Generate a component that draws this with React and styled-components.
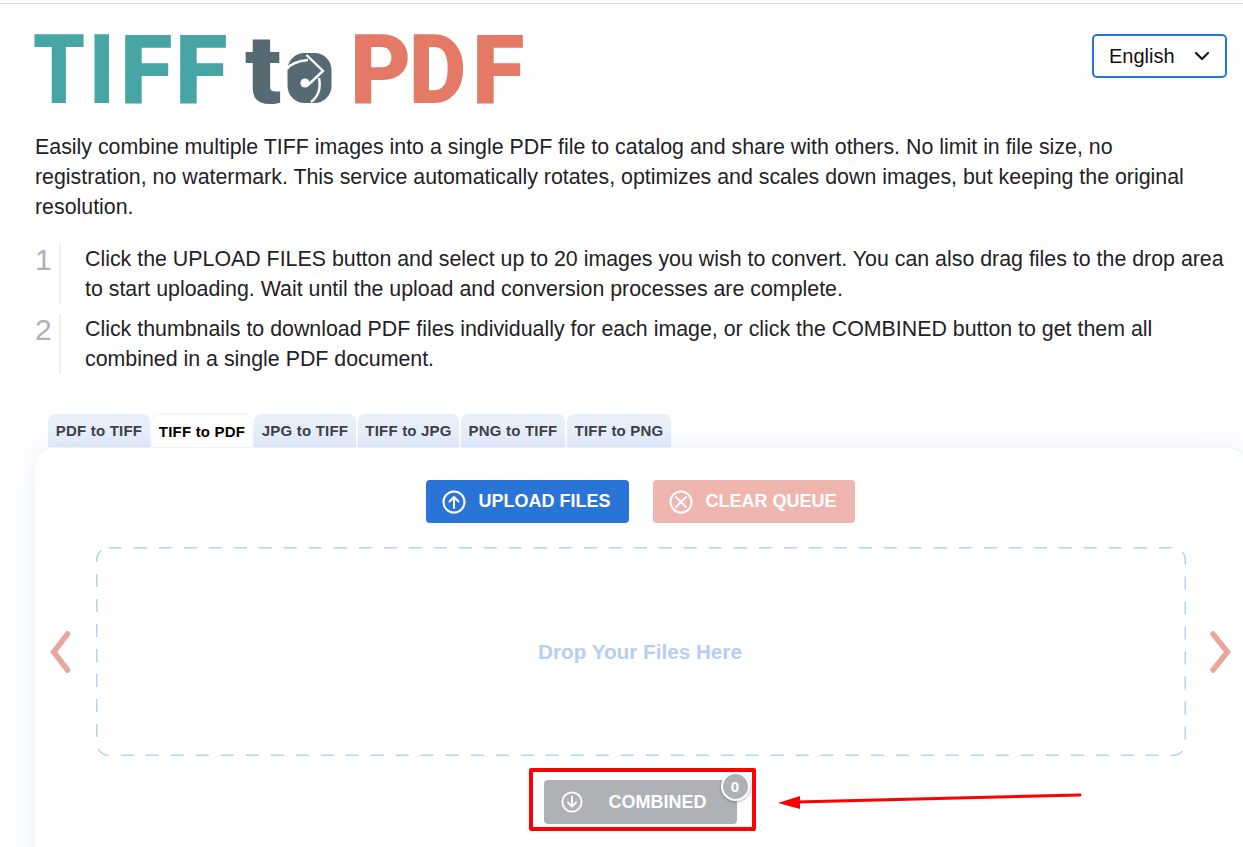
import React from 'react';
import styled, { createGlobalStyle } from 'styled-components';

const GlobalStyle = createGlobalStyle`
  html, body {
    margin: 0;
    padding: 0;
    background: #fff;
  }
  body {
    font-family: "Liberation Sans", Arial, sans-serif;
    color: #1f2226;
  }
`;

const Page = styled.div`
  height: 847px;
  overflow: hidden;
  padding-top: 3px;
  box-sizing: border-box;
`;

const TopLine = styled.div`
  height: 1px;
  background: #dfdfdf;
`;

const Header = styled.header`
  display: flex;
  justify-content: space-between;
  align-items: flex-start;
  padding: 30px 16px 0 34px;
  height: 98px;
`;

const LogoSvg = styled.svg`
  display: block;
  overflow: visible;
  width: 491px;
  height: 70px;
  font-family: Roboto, "Liberation Sans", sans-serif;
  font-weight: 900;
  font-size: 96px;
`;

const LangSelect = styled.div`
  width: 135px;
  height: 44px;
  box-sizing: border-box;
  border: 2px solid #2a74d8;
  border-radius: 5px;
  display: flex;
  align-items: center;
  justify-content: space-between;
  padding: 0 15px;
  font-size: 20px;
  color: #111;
`;

const Content = styled.main`
  padding-left: 35px;
`;

const Intro = styled.p`
  margin: 0 0 22px;
  width: 1180px;
  font-size: 21.37px;
  line-height: 30px;
`;

const Steps = styled.ol`
  list-style: none;
  margin: 0 0 40px;
  padding: 0;
  display: flex;
  flex-direction: column;
  gap: 10px;
`;

const Step = styled.li`
  display: flex;
  height: 60px;
`;

const StepNumber = styled.span`
  width: 24px;
  font-size: 30px;
  line-height: 32px;
  color: #aeb2b8;
`;

const StepText = styled.p`
  margin: 0;
  width: 1144px;
  padding-left: 24px;
  border-left: 2px solid #f0f0f0;
  font-size: 21.37px;
  line-height: 30px;
`;

const Tabs = styled.nav`
  display: flex;
  gap: 2px;
  padding-left: 13px;
  height: 33px;
  align-items: flex-end;
`;

const Tab = styled.div`
  width: ${p => p.$width}px;
  height: ${p => (p.$active ? '32px' : '33px')};
  box-sizing: border-box;
  display: flex;
  align-items: center;
  justify-content: center;
  border-radius: 7px 7px 0 0;
  font-size: 15px;
  font-weight: 700;
  letter-spacing: 0.2px;
  white-space: nowrap;
  position: relative;
  z-index: ${p => (p.$active ? 2 : 0)};
  color: ${p => (p.$active ? '#000' : '#3d4048')};
  background: ${p => (p.$active ? '#fff' : 'linear-gradient(#e8eff9 85%, #e2ecfa)')};
  box-shadow: ${p => (p.$active ? '0 -1px 3px rgba(60, 110, 200, 0.12)' : 'none')};
`;

const Panel = styled.section`
  position: relative;
  z-index: 1;
  width: 1212px;
  height: 460px;
  box-sizing: border-box;
  background: #fff;
  border-radius: 20px 20px 0 0;
  border-top: 1px solid #f1f3f7;
  box-shadow: 0 0 28px rgba(70, 130, 230, 0.13);
  padding-top: 32px;
`;

const Actions = styled.div`
  display: flex;
  justify-content: center;
  gap: 24px;
  margin-bottom: 24px;
  padding-right: 2px;
`;

const ActionButton = styled.div`
  width: ${p => p.$width}px;
  height: 43px;
  box-sizing: border-box;
  display: flex;
  align-items: center;
  padding-left: 16px;
  gap: 13px;
  border-radius: 4px;
  background: ${p => p.$bg};
  color: #fff;
  font-size: 18px;
  font-weight: 700;
`;

const Carousel = styled.div`
  display: grid;
  grid-template-columns: 61px 1090px 61px;
  align-items: center;
`;

const ArrowSlot = styled.div`
  display: flex;
  justify-content: ${p => (p.$right ? 'flex-end' : 'flex-start')};
  padding: ${p => (p.$right ? '0 14px 0 0' : '0 0 0 9px')};
`;

const DropZone = styled.div`
  height: 209px;
  box-sizing: border-box;
  padding-right: 2px;
  display: flex;
  align-items: center;
  justify-content: center;
  font-size: 20.7px;
  font-weight: 700;
  color: #b6cef3;
  background-image: url("data:image/svg+xml,%3Csvg xmlns='http://www.w3.org/2000/svg' width='1090' height='209'%3E%3Crect x='.75' y='.75' width='1088.5' height='207.5' rx='12' fill='none' stroke='%23b9d0f1' stroke-width='1.5' stroke-dasharray='13 12'/%3E%3C/svg%3E");
`;

const CombinedRow = styled.div`
  display: flex;
  justify-content: center;
  margin-top: 24px;
  padding-right: 2px;
`;

const CombinedButton = styled.div`
  position: relative;
  width: 193px;
  height: 44px;
  box-sizing: border-box;
  display: flex;
  align-items: center;
  padding-left: 17px;
  gap: 26px;
  border-radius: 4px;
  background: #aeb1b5;
  color: #fff;
  font-size: 18px;
  font-weight: 700;
`;

const Badge = styled.span`
  position: absolute;
  top: -8px;
  right: -13px;
  width: 29px;
  height: 29px;
  box-sizing: border-box;
  border: 2px solid #fff;
  border-radius: 50%;
  background: #aeb1b5;
  box-shadow: 0 1px 3px rgba(0, 0, 0, 0.3);
  display: flex;
  align-items: center;
  justify-content: center;
  font-size: 15px;
`;

const RedFrame = styled.div`
  position: absolute;
  left: -15px;
  top: -12px;
  width: 227px;
  height: 63px;
  box-sizing: border-box;
  border: 4px solid #fe0000;
  border-radius: 2px;
  z-index: 3;
`;

const RedArrow = styled.svg`
  position: absolute;
  left: 232px;
  top: 10px;
  z-index: 3;
`;

const logoLetters = [
  { ch: 'T', x: 33, sx: 0.86, fill: '#47a5a6' },
  { ch: 'I', x: 89, sx: 0.88, fill: '#47a5a6' },
  { ch: 'F', x: 120, sx: 1, fill: '#47a5a6' },
  { ch: 'F', x: 175, sx: 1, fill: '#47a5a6' },
  { ch: 'P', x: 350, sx: 0.98, fill: '#e47a65' },
  { ch: 'D', x: 409, sx: 0.92, fill: '#e47a65' },
  { ch: 'F', x: 472, sx: 1, fill: '#e47a65' },
];

const Logo = () => (
  <LogoSvg viewBox="34 33 491 70">
    {logoLetters.map((l, i) => (
      <text key={i} transform={`translate(${l.x} 102) scale(${l.sx} 1)`} fill={l.fill}>
        {l.ch}
      </text>
    ))}
    <text transform="translate(245 102) scale(1.1 1)" fill="#566a73">t</text>
    <rect x="287.5" y="52" width="44" height="50" rx="17" fill="#566a73" />
    <path d="M287 68c4-6 11-8 21-9M319 77c2 10 0 18-8 24" fill="none" stroke="#fff" strokeWidth="2.4" />
    <path d="M306.5 54L323 70l-15 14" fill="none" stroke="#fff" strokeWidth="2.4" />
    <circle cx="305" cy="82" r="4.6" fill="#fff" />
  </LogoSvg>
);

const CircleIcon = ({ size = 24, children }) => (
  <svg width={size} height={size} viewBox="0 0 24 24" fill="none" stroke="#fff" strokeWidth="2" strokeLinecap="round" strokeLinejoin="round">
    <circle cx="12" cy="12" r="10.5" />
    {children}
  </svg>
);

const Chevron = ({ right }) => (
  <svg width="28" height="44" viewBox="0 0 28 44" fill="none" stroke="#e9a79c" strokeWidth="5.5" strokeLinecap="round" strokeLinejoin="miter">
    {right ? <path d="M8 4l14.5 18L8 40" /> : <path d="M23.5 4L9.7 22l13.8 18" />}
  </svg>
);

const tabs = [
  { label: 'PDF to TIFF', width: 102 },
  { label: 'TIFF to PDF', width: 100, active: true },
  { label: 'JPG to TIFF', width: 102 },
  { label: 'TIFF to JPG', width: 101 },
  { label: 'PNG to TIFF', width: 104 },
  { label: 'TIFF to PNG', width: 104 },
];

const App = () => (
  <Page>
    <GlobalStyle />
    <TopLine />
    <Header>
      <Logo />
      <LangSelect>
        English
        <svg width="16" height="10" viewBox="0 0 16 10" fill="none" stroke="#111" strokeWidth="2.2" strokeLinecap="round" strokeLinejoin="round">
          <path d="M2 2l6 6 6-6" />
        </svg>
      </LangSelect>
    </Header>
    <Content>
      <Intro>
        Easily combine multiple TIFF images into a single PDF file to catalog and share with others. No limit in file size, no registration, no watermark. This service automatically rotates, optimizes and scales down images, but keeping the original resolution.
      </Intro>
      <Steps>
        <Step>
          <StepNumber>1</StepNumber>
          <StepText>
            Click the UPLOAD FILES button and select up to 20 images you wish to convert. You can also drag files to the drop area to start uploading. Wait until the upload and conversion processes are complete.
          </StepText>
        </Step>
        <Step>
          <StepNumber>2</StepNumber>
          <StepText>
            Click thumbnails to download PDF files individually for each image, or click the COMBINED button to get them all combined in a single PDF document.
          </StepText>
        </Step>
      </Steps>
      <Tabs>
        {tabs.map(t => (
          <Tab key={t.label} $width={t.width} $active={t.active}>{t.label}</Tab>
        ))}
      </Tabs>
      <Panel>
        <Actions>
          <ActionButton $width={203} $bg="#2a74d8">
            <CircleIcon><path d="M12 18V7M7.5 11.5L12 7l4.5 4.5" /></CircleIcon>
            UPLOAD FILES
          </ActionButton>
          <ActionButton $width={202} $bg="#eeb6af">
            <CircleIcon><path d="M7 7l10 10M17 7L7 17" /></CircleIcon>
            CLEAR QUEUE
          </ActionButton>
        </Actions>
        <Carousel>
          <ArrowSlot><Chevron /></ArrowSlot>
          <DropZone>Drop Your Files Here</DropZone>
          <ArrowSlot $right><Chevron right /></ArrowSlot>
        </Carousel>
        <CombinedRow>
          <CombinedButton>
            <CircleIcon size={22}><path d="M12 6v11M7.5 12.5L12 17l4.5-4.5" /></CircleIcon>
            COMBINED
            <Badge>0</Badge>
            <RedFrame />
            <RedArrow width="306" height="20" viewBox="0 0 306 20">
              <path d="M304 5L20 12" stroke="#fe0000" strokeWidth="3" strokeLinecap="round" />
              <path d="M2 13l22-7v13z" fill="#fe0000" />
            </RedArrow>
          </CombinedButton>
        </CombinedRow>
      </Panel>
    </Content>
  </Page>
);

export default App;
